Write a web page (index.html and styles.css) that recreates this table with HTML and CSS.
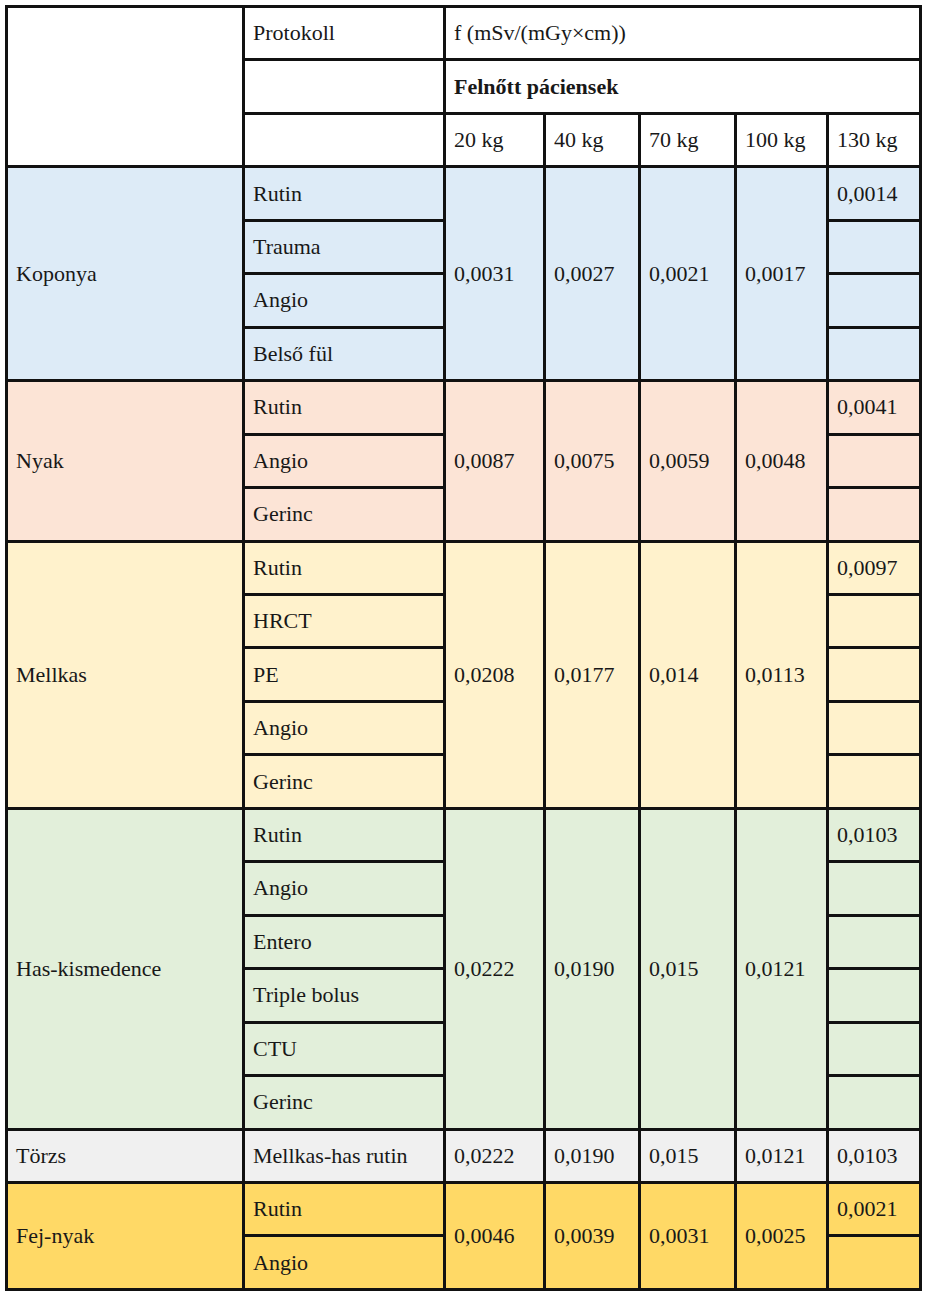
FILE: index.html
```html
<!DOCTYPE html>
<html lang="hu">
<head>
<meta charset="utf-8">
<title>Konverziós tényezők</title>
<link rel="stylesheet" href="styles.css">
</head>
<body>
<table class="dose">
  <colgroup>
    <col class="c-region"><col class="c-proto"><col class="c-w1"><col class="c-w2"><col class="c-w3"><col class="c-w4"><col class="c-w5">
  </colgroup>
  <tr class="head">
    <td rowspan="3"></td>
    <td>Protokoll</td>
    <td colspan="5">f (mSv/(mGy×cm))</td>
  </tr>
  <tr class="head">
    <td></td>
    <td colspan="5" class="bold">Felnőtt páciensek</td>
  </tr>
  <tr class="head">
    <td></td>
    <td>20 kg</td><td>40 kg</td><td>70 kg</td><td>100 kg</td><td>130 kg</td>
  </tr>

  <tr class="blue">
    <td rowspan="4">Koponya</td>
    <td>Rutin</td>
    <td rowspan="4">0,0031</td><td rowspan="4">0,0027</td><td rowspan="4">0,0021</td><td rowspan="4">0,0017</td>
    <td>0,0014</td>
  </tr>
  <tr class="blue"><td>Trauma</td><td></td></tr>
  <tr class="blue"><td>Angio</td><td></td></tr>
  <tr class="blue"><td>Belső fül</td><td></td></tr>

  <tr class="pink">
    <td rowspan="3">Nyak</td>
    <td>Rutin</td>
    <td rowspan="3">0,0087</td><td rowspan="3">0,0075</td><td rowspan="3">0,0059</td><td rowspan="3">0,0048</td>
    <td>0,0041</td>
  </tr>
  <tr class="pink"><td>Angio</td><td></td></tr>
  <tr class="pink"><td>Gerinc</td><td></td></tr>

  <tr class="yellow">
    <td rowspan="5">Mellkas</td>
    <td>Rutin</td>
    <td rowspan="5">0,0208</td><td rowspan="5">0,0177</td><td rowspan="5">0,014</td><td rowspan="5">0,0113</td>
    <td>0,0097</td>
  </tr>
  <tr class="yellow"><td>HRCT</td><td></td></tr>
  <tr class="yellow"><td>PE</td><td></td></tr>
  <tr class="yellow"><td>Angio</td><td></td></tr>
  <tr class="yellow"><td>Gerinc</td><td></td></tr>

  <tr class="green">
    <td rowspan="6">Has-kismedence</td>
    <td>Rutin</td>
    <td rowspan="6">0,0222</td><td rowspan="6">0,0190</td><td rowspan="6">0,015</td><td rowspan="6">0,0121</td>
    <td>0,0103</td>
  </tr>
  <tr class="green"><td>Angio</td><td></td></tr>
  <tr class="green"><td>Entero</td><td></td></tr>
  <tr class="green"><td>Triple bolus</td><td></td></tr>
  <tr class="green"><td>CTU</td><td></td></tr>
  <tr class="green"><td>Gerinc</td><td></td></tr>

  <tr class="grey">
    <td>Törzs</td>
    <td>Mellkas-has rutin</td>
    <td>0,0222</td><td>0,0190</td><td>0,015</td><td>0,0121</td><td>0,0103</td>
  </tr>

  <tr class="gold">
    <td rowspan="2">Fej-nyak</td>
    <td>Rutin</td>
    <td rowspan="2">0,0046</td><td rowspan="2">0,0039</td><td rowspan="2">0,0031</td><td rowspan="2">0,0025</td>
    <td>0,0021</td>
  </tr>
  <tr class="gold"><td>Angio</td><td></td></tr>
</table>
</body>
</html>
```

FILE: styles.css
```css
html, body {
  margin: 0;
  padding: 0;
  background: #ffffff;
}

body {
  padding: 5px 0 0 5px;
  font-family: "Liberation Serif", serif;
}

.dose {
  border-collapse: collapse;
  table-layout: fixed;
  width: 916px;
  font-family: "Liberation Serif", serif;
  font-size: 22px;
  color: #181818;
}

.c-region { width: 237px; }
.c-proto { width: 201px; }
.c-w1 { width: 100px; }
.c-w2 { width: 95px; }
.c-w3 { width: 96px; }
.c-w4 { width: 92px; }
.c-w5 { width: 93px; }

.dose td {
  border: 3px solid #111111;
  height: 50.46px;
  padding: 0 6px 0 8px;
  vertical-align: middle;
  white-space: nowrap;
  overflow: hidden;
  box-sizing: border-box;
}

.dose tr {
  height: 53.46px;
}

.bold {
  font-weight: bold;
}

.head td { background: #ffffff; }
.blue td { background: #ddebf7; }
.pink td { background: #fce4d6; }
.yellow td { background: #fff2cc; }
.green td { background: #e2efda; }
.grey td { background: #f0f0f0; }
.gold td { background: #ffd966; }
```
